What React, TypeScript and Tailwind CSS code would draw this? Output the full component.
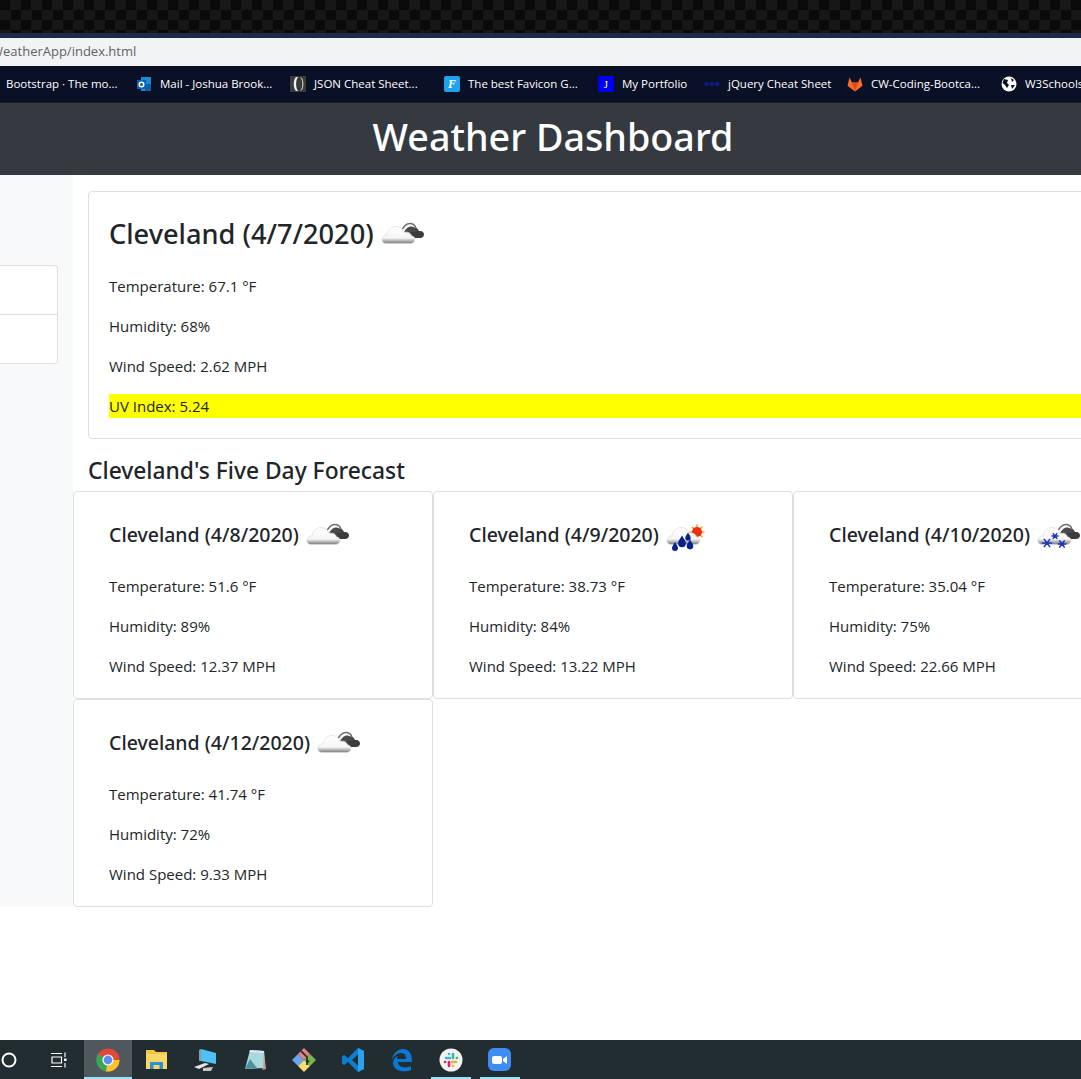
const uiFont = "[font-family:'Open_Sans','Noto_Sans',sans-serif]"
const headFont = "[font-family:'Noto_Sans','Open_Sans',sans-serif]"

const forecastTop = [
  { date: '4/8/2020', temp: '51.6', humidity: '89', wind: '12.37', icon: 'cloud' },
  { date: '4/9/2020', temp: '38.73', humidity: '84', wind: '13.22', icon: 'rain' },
  { date: '4/10/2020', temp: '35.04', humidity: '75', wind: '22.66', icon: 'snow' },
]

const bookmarks = [
  { label: 'Mail - Joshua Brook...', icon: 'outlook', width: 'w-[154px]' },
  { label: 'JSON Cheat Sheet...', icon: 'json', width: 'w-[154px]' },
  { label: 'The best Favicon G...', icon: 'favicon', width: 'w-[154px]' },
  { label: 'My Portfolio', icon: 'portfolio', width: 'w-[106px]' },
  { label: 'jQuery Cheat Sheet', icon: 'jquery', width: 'w-[143px]' },
  { label: 'CW-Coding-Bootca...', icon: 'gitlab', width: 'w-[154px]' },
  { label: 'W3Schools', icon: 'globe', width: 'w-[100px]' },
]

function Drop({ x, y, s = 1 }: { x: number; y: number; s?: number }) {
  return <path transform={`translate(${x} ${y}) scale(${s})`} d="M0-5C1.5-2 3-1 3 1A3 3 0 0 1-3 1C-3-1-1.5-2 0-5Z" fill="#0a1f8f" />
}

function Flake({ x, y, r = 3.6 }: { x: number; y: number; r?: number }) {
  return (
    <path
      stroke="#1d35b5"
      strokeWidth="1.5"
      strokeLinecap="round"
      d={`M${x - r} ${y}H${x + r}M${x - r * 0.6} ${y - r * 0.8}L${x + r * 0.6} ${y + r * 0.8}M${x + r * 0.6} ${y - r * 0.8}L${x - r * 0.6} ${y + r * 0.8}`}
    />
  )
}

function WeatherIcon({ kind, id }: { kind: string; id: string }) {
  return (
    <svg width="50" height="50" viewBox="0 0 50 50" className="shrink-0 ml-[5px]">
      <defs>
        <linearGradient id={id} x1="0" y1="0" x2="0" y2="1">
          <stop offset="0" stopColor="#ffffff" />
          <stop offset="0.68" stopColor="#f6f6f6" />
          <stop offset="0.84" stopColor="#b5b5b5" />
          <stop offset="1" stopColor="#777777" />
        </linearGradient>
      </defs>
      {kind === 'rain' ? (
        <g>
          <g stroke="#f5a623" strokeWidth="1.6">
            <path d="M33 14.500V18M33 26V29.500M25.500 22H29M37 22H40.500M27.700 16.700L30 19M36 25L38.300 27.300M38.300 16.700L36 19" />
          </g>
          <circle cx="33" cy="22" r="5" fill="#ee2f0f" />
        </g>
      ) : (
        <g>
          <path d="M26 24C27 20 30 19 33 20C36 17.500 39 19 40 22C43 21.500 45 23 45 25.500C45 28 43 29 41 29H31C28 29 26 27 26 24Z" fill="#3c3c3c" />
          <path d="M22 23C24 18 27 14.500 31 14.500C34 14.500 36 16.500 37 19" fill="none" stroke="#6f6f6f" strokeWidth="1.600" />
          <path d="M25 23C27 19 30 17 33 17.500C36 18 38 20 39 22L30 24Z" fill="#4a4a4a" />
        </g>
      )}
      <path
        d="M7 34.500C3.500 34.500 2.500 31.500 3 29.500C3.500 27 5.500 25.500 8 26C8.500 20.500 13 17 18 17.500C21.500 18 24.500 20.500 25.500 23.500C28.500 22.500 32 24 32.500 27C35.500 27 36.500 30 35.500 32C35 33.500 33.500 34.500 31.500 34.500Z"
        fill={`url(#${id})`}
        stroke="#dcdcdc"
        strokeWidth="0.700"
      />
      {kind === 'rain' && (
        <g>
          <Drop x={18} y={32} s={1.3} />
          <Drop x={24} y={27} s={0.9} />
          <Drop x={26} y={35} s={1.1} />
          <Drop x={11} y={37} s={1} />
        </g>
      )}
      {kind === 'snow' && (
        <g>
          <Flake x={12} y={33} r={4.5} />
          <Flake x={20} y={26} r={3} />
          <Flake x={27} y={34} r={3.8} />
        </g>
      )}
    </svg>
  )
}

function BookmarkIcon({ kind }: { kind: string }) {
  if (kind === 'outlook')
    return (
      <svg width="16" height="16" viewBox="0 0 16 16" className="shrink-0">
        <rect x="5" y="1" width="10" height="14" fill="#1a8ad4" />
        <rect x="9" y="8" width="6" height="7" fill="#0f5fa8" />
        <rect x="1" y="4" width="9" height="9" fill="#0d63b3" />
        <circle cx="5.500" cy="8.500" r="2.300" fill="none" stroke="#fff" strokeWidth="1.400" />
      </svg>
    )
  if (kind === 'json')
    return (
      <svg width="16" height="16" viewBox="0 0 16 16" className="shrink-0">
        <rect width="16" height="16" fill="#3b3b3b" />
        <path d="M6 1C3 4 3 12 6 15H8C5.500 12 5.500 4 8 1Z" fill="#f2f2f2" />
        <path d="M11 1.500C13.500 4 13.500 12 11 14.500" fill="none" stroke="#e0e0e0" />
      </svg>
    )
  if (kind === 'favicon')
    return (
      <div className="w-4 h-4 shrink-0 rounded-[2px] bg-[#1fa2ee] flex items-center justify-center text-white text-[12px] leading-none font-bold italic [font-family:'Liberation_Serif',serif]">
        F
      </div>
    )
  if (kind === 'portfolio')
    return <div className="w-4 h-4 shrink-0 bg-[#0000f0] flex items-center justify-center text-white text-[11px] leading-none [font-family:'Liberation_Serif',serif]">J</div>
  if (kind === 'jquery')
    return (
      <svg width="16" height="16" viewBox="0 0 16 16" className="shrink-0">
        <path d="M0 7H16V9H0Z" fill="#0a1560" />
        <rect x="1" y="6" width="3" height="4" fill="#0c1a80" />
        <rect x="6" y="6" width="3" height="4" fill="#0c1a80" />
        <rect x="11" y="6" width="4" height="4" fill="#0c1a80" />
      </svg>
    )
  if (kind === 'gitlab')
    return (
      <svg width="16" height="16" viewBox="0 0 16 16" className="shrink-0">
        <path d="M8 15.500L.5 9.800 2.500 1.500 5 6.500H11L13.500 1.500 15.500 9.800Z" fill="#fc6d26" />
        <path d="M8 15.500L5 6.500H11Z" fill="#e24329" />
      </svg>
    )
  return (
    <svg width="16" height="16" viewBox="0 0 16 16" className="shrink-0">
      <circle cx="8" cy="8" r="7.500" fill="#fff" />
      <path d="M3 3L7 4 6 7 8 9 6 12 4 9 1.500 7ZM10 2L13 4 11 6ZM10 9L14 9 11 13Z" fill="#0a1024" />
    </svg>
  )
}

function TaskIcon({ kind }: { kind: string }) {
  if (kind === 'cortana')
    return (
      <svg width="18" height="18" viewBox="0 0 18 18">
        <circle cx="9" cy="9" r="6.500" fill="none" stroke="#fff" strokeWidth="2" />
      </svg>
    )
  if (kind === 'tasks')
    return (
      <svg width="18" height="18" viewBox="0 0 18 18" fill="none" stroke="#fff" strokeWidth="1.200">
        <path d="M1 2.500H12M1 15.500H12M2 6H11.500V12H2ZM15 1.500V6M15 12V16.500" />
        <rect x="14" y="7.500" width="2.500" height="2.500" fill="#fff" stroke="none" />
      </svg>
    )
  if (kind === 'chrome')
    return (
      <svg width="24" height="24" viewBox="0 0 24 24">
        <circle cx="12" cy="12" r="11.500" fill="#e0483a" />
        <path d="M12 12L2 6A11.500 11.500 0 0 0 12 23.500Z" fill="#35a853" />
        <path d="M12 12H23.500A11.500 11.500 0 0 1 10 23.400Z" fill="#fbc42d" />
        <circle cx="12" cy="12" r="5.600" fill="#fff" />
        <circle cx="12" cy="12" r="4.400" fill="#5d8eef" />
      </svg>
    )
  if (kind === 'files')
    return (
      <svg width="24" height="22" viewBox="0 0 24 22">
        <path d="M1 1H9L11 3H22V20H1Z" fill="#f6c346" />
        <rect x="1" y="5" width="21" height="15" fill="#fbd768" />
        <path d="M5 20V13H18V20H14.500V16H8.500V20Z" fill="#2f8fd6" />
      </svg>
    )
  if (kind === 'pc')
    return (
      <svg width="26" height="24" viewBox="0 0 26 24">
        <path d="M8 1L23 5V16L8 13Z" fill="#4cc2f7" />
        <path d="M8 1L6 2V13L8 13Z" fill="#8d9aa3" />
        <path d="M1 19L12 15 16 16 6 21Z" fill="#e6e6e6" />
        <path d="M10 20L20 19 18 23 10 23Z" fill="#c8c8c8" />
      </svg>
    )
  if (kind === 'notes')
    return (
      <svg width="24" height="24" viewBox="0 0 24 24">
        <path d="M7 2L21 3 22 20 2 21Z" fill="#a9d9dd" />
        <path d="M7 2L21 3 21 5 6.500 4Z" fill="#e9e9e9" />
        <path d="M7 11L14 20 2 21Z" fill="#4f8fa0" />
        <path d="M21 3L23 21 19 22 20 20Z" fill="#c2a08f" />
      </svg>
    )
  if (kind === 'git')
    return (
      <svg width="26" height="26" viewBox="0 0 26 26">
        <path d="M13 1L19 7 13 13 7 7Z" fill="#ee8080" />
        <path d="M19 7L25 13 19 19 13 13Z" fill="#7ab648" />
        <path d="M7 7L13 13 7 19 1 13Z" fill="#6ba5f2" />
        <path d="M13 13L19 19 13 25 7 19Z" fill="#f5de74" />
        <path d="M10 4L16 10V18M16 13L18 15" stroke="#26323a" strokeWidth="1.800" fill="none" />
      </svg>
    )
  if (kind === 'vscode')
    return (
      <svg width="24" height="26" viewBox="0 0 24 26">
        <path d="M17 1L23 4V22L17 25 7 15 3 18 1 16.500V9.500L3 8 7 11ZM17 7.500L11 13 17 18.500Z" fill="#0a7fd0" />
        <path d="M17 1L23 4V22L17 25Z" fill="#2aa2ee" />
      </svg>
    )
  if (kind === 'edge')
    return (
      <svg width="22" height="24" viewBox="0 0 22 24">
        <path d="M1 12C2 5 7 1 12 1C18 1 21 6 21 14H7C7 19 14 21 20 18V22C13 25 2 23 2 15C2 12 4 9 7 8C6 9 6 10 6 11H15C15 7 13 5 10 5C6 5 3 8 1 12Z" fill="#0a78d4" />
      </svg>
    )
  if (kind === 'slack')
    return (
      <svg width="24" height="24" viewBox="0 0 24 24">
        <circle cx="12" cy="12" r="11.500" fill="#f2f2f2" />
        <g strokeWidth="2.600" strokeLinecap="round">
          <path d="M7 10H11M10 6V6.100" stroke="#3db6e0" />
          <path d="M14 6V10M18 10H17.900" stroke="#3bb58a" />
          <path d="M13 14H17M14 18H14.100" stroke="#e3b33c" />
          <path d="M10 14V18M6 14H6.100" stroke="#d9265c" />
        </g>
      </svg>
    )
  return (
    <div className="w-[23px] h-[23px] rounded-[6px] bg-[#3f8cf5] flex items-center justify-center gap-[1px]">
      <div className="w-[10px] h-[8px] rounded-[2px] bg-white" />
      <svg width="4" height="8" viewBox="0 0 4 8">
        <path d="M0 3L4 0V8L0 5Z" fill="#fff" />
      </svg>
    </div>
  )
}

function StatLine({ children }: { children: React.ReactNode }) {
  return <p className="h-6 leading-6 text-[15px] mb-4 last:mb-0">{children}</p>
}

function ForecastCard({ date, temp, humidity, wind, icon, id }: { date: string; temp: string; humidity: string; wind: string; icon: string; id: string }) {
  return (
    <div className="w-[360px] h-[208px] bg-white border border-[#dfdfdf] rounded-[4px] pt-5 pl-[35px]">
      <div className="flex items-center h-[46px] mb-4">
        <h5 className={`text-[19.5px] font-medium whitespace-nowrap ${headFont}`}>Cleveland ({date})</h5>
        <WeatherIcon kind={icon} id={id} />
      </div>
      <StatLine>Temperature: {temp} °F</StatLine>
      <StatLine>Humidity: {humidity}%</StatLine>
      <StatLine>Wind Speed: {wind} MPH</StatLine>
    </div>
  )
}

const taskSlots = [
  { kind: 'cortana', width: 'w-[48px]', active: false, mark: '' },
  { kind: 'tasks', width: 'w-[51px]', active: false, mark: '' },
  { kind: 'chrome', width: 'w-[48px]', active: true, mark: 'left-0 right-0' },
  { kind: 'files', width: 'w-[49px]', active: false, mark: '' },
  { kind: 'pc', width: 'w-[49px]', active: false, mark: '' },
  { kind: 'notes', width: 'w-[49px]', active: false, mark: '' },
  { kind: 'git', width: 'w-[49px]', active: false, mark: '' },
  { kind: 'vscode', width: 'w-[49px]', active: false, mark: '' },
  { kind: 'edge', width: 'w-[49px]', active: false, mark: '' },
  { kind: 'slack', width: 'w-[49px]', active: false, mark: 'left-[5px] right-[4px]' },
  { kind: 'zoom', width: 'w-[49px]', active: false, mark: 'left-[5px] right-[4px]' },
]

export default function App() {
  return (
    <div className={`w-[1081px] h-[1079px] overflow-hidden flex flex-col bg-white text-[#212529] ${uiFont}`}>
      <div className="h-[33px] shrink-0 bg-[repeating-conic-gradient(#171717_0_25%,#0a0a0a_0_50%)] bg-[length:21px_20px]" />
      <div className="h-[5px] shrink-0 bg-[#1d2947]" />
      <div className="h-[28px] shrink-0 bg-[#f1f3f4] flex items-center text-[13px] text-[#5f6368] whitespace-nowrap">
        <span className="-ml-[9px]">WeatherApp/index.html</span>
      </div>
      <div className="h-[37px] shrink-0 bg-[#0a1026] border-b border-[#1b1c20] flex items-center text-[11.5px] text-white whitespace-nowrap pl-[6px]">
        <span className="w-[130px] shrink-0">Bootstrap · The mo...</span>
        {bookmarks.map((b) => (
          <div key={b.label} className={`flex items-center gap-2 shrink-0 ${b.width}`}>
            <BookmarkIcon kind={b.icon} />
            <span>{b.label}</span>
          </div>
        ))}
      </div>
      <header className="h-[72px] shrink-0 bg-[#343a40] flex items-center justify-center pl-[25px] pb-[4px]">
        <h1 className={`text-[37.7px] font-medium text-white whitespace-nowrap ${headFont}`}>Weather Dashboard</h1>
      </header>

      <div className="flex h-[732px] shrink-0">
        <aside className="w-[73px] shrink-0 bg-[#f8f9fa] pt-[90px]">
          <div className="w-[58px] h-[99px] bg-white border border-l-0 border-[#dfdfdf] rounded-r-[4px] flex flex-col">
            <div className="h-[49px] border-b border-[#dfdfdf]" />
          </div>
        </aside>
        <main className="flex-1 min-w-0">
          <section className="ml-[15px] mt-4 w-[1100px] h-[248px] border border-[#dfdfdf] rounded-[4px] p-5">
            <div className="flex items-center h-[46px] mb-4 pb-[2px]">
              <h2 className={`text-[27.2px] font-medium whitespace-nowrap ${headFont}`}>Cleveland (4/7/2020)</h2>
              <WeatherIcon kind="cloud" id="main-cloud" />
            </div>
            <StatLine>Temperature: 67.1 °F</StatLine>
            <StatLine>Humidity: 68%</StatLine>
            <StatLine>Wind Speed: 2.62 MPH</StatLine>
            <p className="h-6 leading-6 text-[15px] bg-[#ffff00]">UV Index: 5.24</p>
          </section>
          <h3 className={`ml-[15px] h-[52px] pt-[13px] flex items-center text-[22.8px] font-medium whitespace-nowrap ${headFont}`}>Cleveland's Five Day Forecast</h3>
          <div className="grid grid-cols-[repeat(3,360px)]">
            {forecastTop.map((f) => (
              <ForecastCard key={f.date} {...f} id={`cloud-${f.date}`} />
            ))}
            <ForecastCard date="4/12/2020" temp="41.74" humidity="72" wind="9.33" icon="cloud" id="cloud-412" />
          </div>
        </main>
      </div>

      <div className="flex-1" />
      <footer className="h-[39px] shrink-0 bg-[#222d32] flex -ml-[15px]">
        {taskSlots.map((t) => (
          <div key={t.kind} className={`relative shrink-0 h-full flex items-center justify-center ${t.width} ${t.active ? 'bg-[#50585d]' : ''}`}>
            <TaskIcon kind={t.kind} />
            {t.mark && <div className={`absolute bottom-0 h-[2px] bg-[#99e4fb] ${t.mark}`} />}
          </div>
        ))}
      </footer>
    </div>
  )
}
